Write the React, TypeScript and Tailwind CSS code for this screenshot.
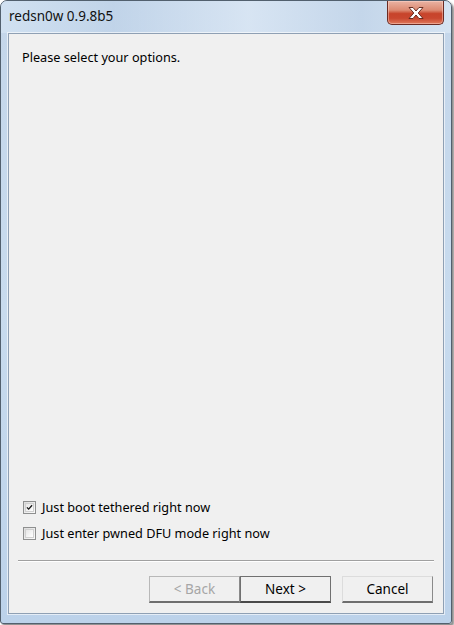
import React from "react";

const font = { fontFamily: '"Noto Sans", "Open Sans", sans-serif' };

function CloseX() {
  return (
    <svg width="20" height="14" viewBox="0 0 20 14">
      <path
        d="M3 1.5 L7 1.5 L10 5 L13 1.5 L17 1.5 L12.2 7 L17 12.5 L13 12.5 L10 9 L7 12.5 L3 12.5 L7.8 7 Z"
        fill="#ffffff"
        stroke="#5a1f14"
        strokeWidth="0.9"
        strokeLinejoin="round"
      />
    </svg>
  );
}

function CheckBox({ checked }: { checked?: boolean }) {
  return (
    <div className="w-[13px] h-[13px] border border-[#8e8f8f] bg-gradient-to-br from-[#dcdcdc] to-[#fbfbfb] flex items-center justify-center shrink-0">
      <div className="w-[9px] h-[9px] border border-[#d0d0d0] bg-gradient-to-br from-[#e6e6e6] to-white flex items-center justify-center">
        {checked && (
          <svg width="9" height="9" viewBox="0 0 9 9">
            <path d="M1.2 4.3 L3.4 6.6 L7.8 1.6" fill="none" stroke="#1a1a1a" strokeWidth="1.7" />
          </svg>
        )}
      </div>
    </div>
  );
}

export default function App() {
  return (
    <div className="w-[454px] h-[625px] bg-white relative overflow-hidden" style={font}>
      <div className="w-[452px] h-[624px] rounded-t-[7px] rounded-b-[3px] border border-[#52606e] shadow-[2px_2px_2px_rgba(0,0,0,0.45)] bg-gradient-to-b from-[#c4d6ea] via-[#c8dbee] to-[#bcd2ea] flex flex-col">
        {/* title bar */}
        <div className="h-[32px] flex items-start justify-between shrink-0 bg-[linear-gradient(90deg,rgba(210,226,242,0.9),rgba(190,210,232,0.6)_25%,rgba(220,232,245,0.8)_55%,rgba(196,214,234,0.7)_80%,rgba(215,229,243,0.9))] rounded-t-[6px]">
          <div className="pl-[8px] pt-[6px] text-[13.5px] leading-[18px] text-[#111]">redsn0w 0.9.8b5</div>
          <div className="mr-[7px] w-[57px] h-[24px] rounded-b-[5px] border border-[#6b2a22] border-t-0 bg-[linear-gradient(180deg,#eab3a3_0%,#dc8a72_40%,#c7442b_55%,#c9472f_75%,#e07a5c_100%)] shadow-[inset_0_0_0_1px_rgba(255,220,210,0.45)] flex items-center justify-center">
            <CloseX />
          </div>
        </div>
        {/* content */}
        <div className="flex-1 mx-[7px] mb-[9px] border border-[#8fa0b4] shadow-[0_0_0_1px_rgba(255,255,255,0.6)] bg-[#f0f0f0] flex flex-col">
          <div className="pl-[13px] pt-[15px] text-[12.7px] leading-[17px] text-black">Please select your options.</div>
          <div className="flex-1" />
          <div className="pl-[14px] flex flex-col gap-[9px] text-[12.7px] leading-[17px] text-black">
            <div className="flex items-center gap-[6px]">
              <CheckBox checked />
              <span>Just boot tethered right now</span>
            </div>
            <div className="flex items-center gap-[6px]">
              <CheckBox />
              <span>Just enter pwned DFU mode right now</span>
            </div>
          </div>
          <div className="mx-[9px] mt-[18px] h-[2px] border-t border-[#a0a0a0] border-b border-b-white" />
          <div className="flex justify-end pr-[10px] pt-[14px] pb-[10px] text-[13.5px]">
            <div className="w-[91px] h-[27px] border border-[#b8b8b8] border-b-2 border-b-[#6e6e6e] border-r-[#8a8a8a] bg-[#f0f0f0] flex items-center justify-center text-[#a6a6a6]">
              &lt; Back
            </div>
            <div className="w-[91px] h-[27px] border border-[#707070] border-b-2 border-b-[#4a4a4a] bg-[#f0f0f0] flex items-center justify-center text-black">
              Next &gt;
            </div>
            <div className="ml-[11px] w-[91px] h-[27px] border border-[#dcdcdc] border-b-2 border-b-[#6e6e6e] border-r-[#8a8a8a] bg-[#f0f0f0] flex items-center justify-center text-black">
              Cancel
            </div>
          </div>
        </div>
      </div>
    </div>
  );
}
